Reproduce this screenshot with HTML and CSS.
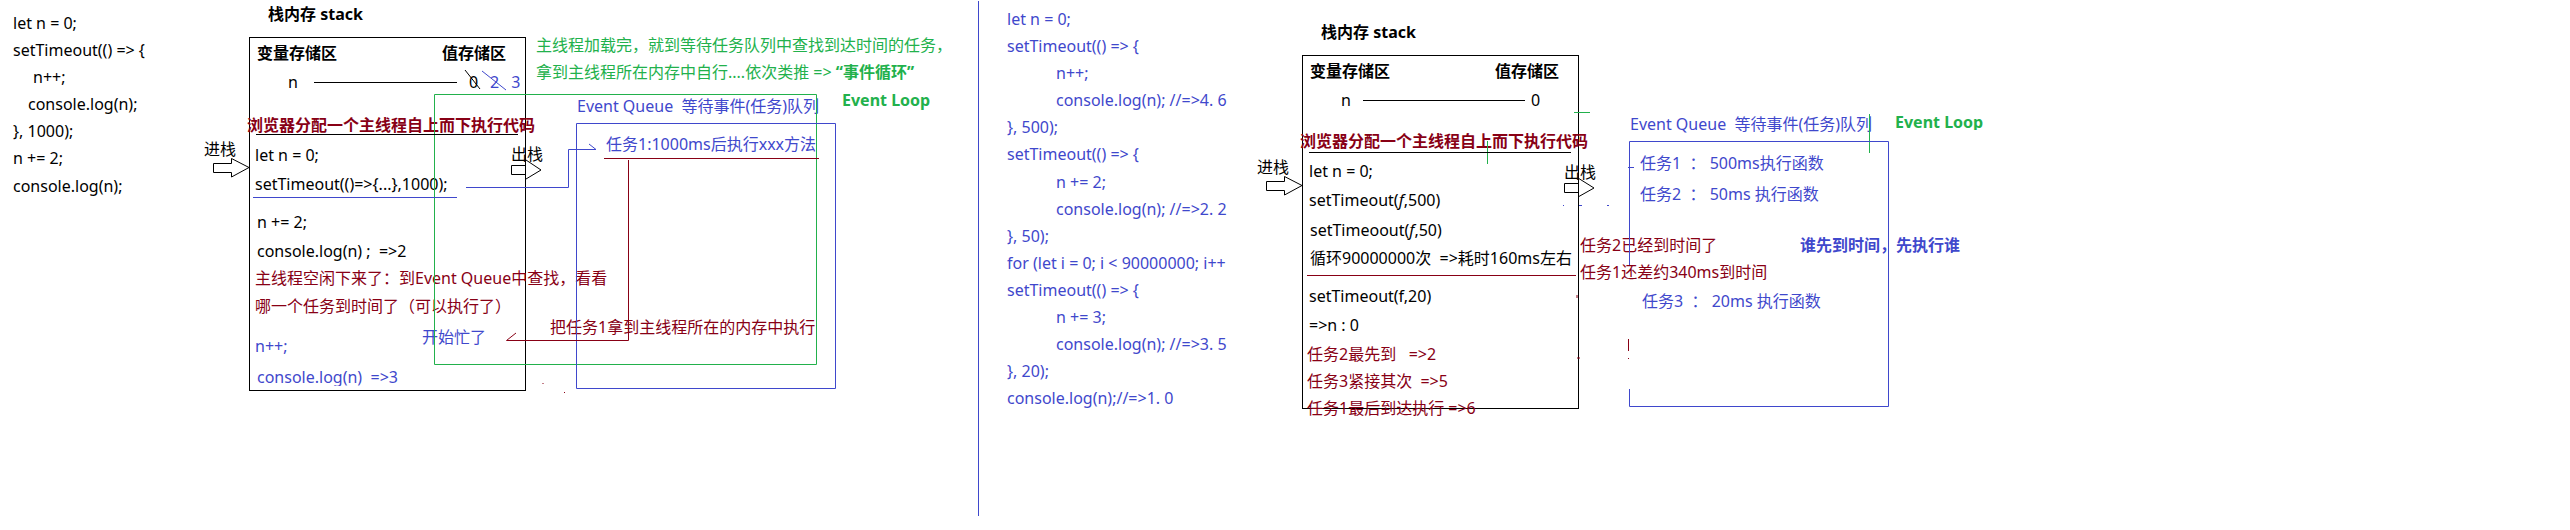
FILE: index.html
```html
<!DOCTYPE html>
<html lang="zh">
<head>
<meta charset="utf-8">
<title>Event Loop</title>
<link rel="stylesheet" href="styles.css">
</head>
<body>
<main class="canvas">
  <svg class="wires" width="2570" height="530" viewBox="0 0 2570 530" fill="none" aria-hidden="true">
    <g class="w-green">
      <path d="M434.5 94.5H816.5V364.5H434.5Z"/>
      <path d="M1574 112.5H1590M1487.5 141V164M1869.5 114V153"/>
    </g>
    <g class="w-blue">
      <path d="M576.5 123.5H835.5V388.5H576.5Z"/>
      <path d="M978.5 1V516"/>
      <path d="M253 197.5H457M466 187.5H568.5V149.5H596L589 144"/>
      <path d="M482 71L506 90"/>
      <path d="M1629.5 265V141.5H1888.5V406.5H1629.5V389"/>
      <path d="M1628 167.5H1634M1563 205.5H1564M1579 205.5H1582M1607 205.5H1609"/>
    </g>
    <g class="w-red">
      <path d="M604 158.5H819M628.5 160V340.5H506.5L516 333"/>
      <path d="M1307 275.5H1576"/>
      <path d="M543 383V384M564 392L565 393M1577 295V298M1577 358H1580M1628.5 339V351M1628.5 358V359"/>
    </g>
    <g class="w-black">
      <path d="M256 134.5H518M1309 152.5H1571"/>
      <path d="M465 70L480 89"/>
      <path d="M213.5 163.5H231.5V158.5L249 167.5L231.5 177V172.5H213.5Z"/>
      <path d="M1266.5 181.5H1284.5V176.5L1302 185.5L1284.5 195V190.5H1266.5Z"/>
      <path d="M526 165.5H511.5V174.5H526M526 160L541 170L526 179"/>
      <path d="M1578 183.5H1564.5V192.5H1578M1578 178L1594 188L1578 197"/>
    </g>
  </svg>

  <div class="code code-a">
    <div class="ln">let n = 0;</div>
    <div class="ln">setTimeout(() =&gt; {</div>
    <div class="ln in-a">n++;</div>
    <div class="ln in-b">console.log(n);</div>
    <div class="ln">}, 1000);</div>
    <div class="ln">n += 2;</div>
    <div class="ln">console.log(n);</div>
  </div>

  <h2 class="title title-a">栈内存 stack</h2>
  <section class="stack stack-a">
    <div class="heads"><b>变量存储区</b><b>值存储区</b></div>
    <div class="slot"><span>n</span><i class="rule rule-a"></i><span class="val">0</span><span class="val-b blue">2</span><span class="val-b blue">3</span></div>
    <div class="row red bold gap-21 out">浏览器分配一个主线程自上而下执行代码</div>
    <div class="row gap-8 mono-l">let n = 0;</div>
    <div class="row gap-7 mono-l">setTimeout(()=&gt;{...},1000);</div>
    <div class="row gap-16 in-3">n += 2;</div>
    <div class="row gap-7 in-3">console.log(n) ; &nbsp;=&gt;2</div>
    <div class="row gap-5 red mono-l">主线程空闲下来了：到Event Queue中查找，看看</div>
    <div class="row gap-6 red mono-l">哪一个任务到时间了（可以执行了）</div>
    <div class="row gap-18 blue mono-l">n++;</div>
    <div class="row gap-9 blue in-3 clip">console.log(n) &nbsp;=&gt;3</div>
  </section>

  <div class="lbl l-in-a">进栈</div>
  <div class="lbl l-out-a">出栈</div>
  <div class="lbl blue l-busy">开始忙了</div>
  <div class="lbl red l-take">把任务1拿到主线程所在的内存中执行</div>

  <div class="note green">
    <div>主线程加载完，就到等待任务队列中查找到达时间的任务，</div>
    <div>拿到主线程所在内存中自行....依次类推 =&gt; <b>“事件循环”</b></div>
  </div>
  <div class="lbl green bold l-loop-a">Event Loop</div>
  <div class="lbl blue l-q-a">Event Queue &nbsp;等待事件(任务)队列</div>
  <div class="lbl blue l-task-a">任务1:1000ms后执行xxx方法</div>

  <div class="code code-b blue">
    <div class="ln">let n = 0;</div>
    <div class="ln">setTimeout(() =&gt; {</div>
    <div class="ln in-c">n++;</div>
    <div class="ln in-c">console.log(n); //=&gt;4. 6</div>
    <div class="ln">}, 500);</div>
    <div class="ln">setTimeout(() =&gt; {</div>
    <div class="ln in-c">n += 2;</div>
    <div class="ln in-c">console.log(n); //=&gt;2. 2</div>
    <div class="ln">}, 50);</div>
    <div class="ln">for (let i = 0; i &lt; 90000000; i++</div>
    <div class="ln">setTimeout(() =&gt; {</div>
    <div class="ln in-c">n += 3;</div>
    <div class="ln in-c">console.log(n); //=&gt;3. 5</div>
    <div class="ln">}, 20);</div>
    <div class="ln">console.log(n);//=&gt;1. 0</div>
  </div>

  <h2 class="title title-b">栈内存 stack</h2>
  <section class="stack stack-b">
    <div class="heads"><b>变量存储区</b><b>值存储区</b></div>
    <div class="slot"><span>n</span><i class="rule rule-b"></i><span class="val-c">0</span></div>
    <div class="row red bold gap-19 out">浏览器分配一个主线程自上而下执行代码</div>
    <div class="row gap-8 in-6">let n = 0;</div>
    <div class="row gap-7 in-6">setTimeout(<em>f</em>,500)</div>
    <div class="row gap-8 in-7">setTimeoout(<em>f</em>,50)</div>
    <div class="row gap-6 in-7 wide">循环90000000次 &nbsp;=&gt;耗时160ms左右</div>
    <div class="row gap-16 in-6">setTimeout(f,20)</div>
    <div class="row gap-7 in-6">=&gt;n : 0</div>
    <div class="row gap-7 red in-4">任务2最先到 &nbsp; =&gt;2</div>
    <div class="row gap-5 red in-4">任务3紧接其次 &nbsp;=&gt;5</div>
    <div class="row gap-5 red in-4">任务1最后到达执行 =&gt;6</div>
  </section>

  <div class="lbl l-in-b">进栈</div>
  <div class="lbl l-out-b">出栈</div>
  <div class="lbl red l-t2">任务2已经到时间了</div>
  <div class="lbl red l-t1">任务1还差约340ms到时间</div>

  <div class="lbl blue l-q-b">Event Queue &nbsp;等待事件(任务)队列</div>
  <div class="lbl green bold l-loop-b"><span>Event Loop</span></div>
  <div class="lbl blue l-task-1">任务1 &nbsp;： 500ms执行函数</div>
  <div class="lbl blue l-task-2">任务2 &nbsp;： 50ms 执行函数</div>
  <div class="lbl blue l-task-3">任务3 &nbsp;： 20ms 执行函数</div>
  <div class="lbl blue bold l-who">谁先到时间，先执行谁</div>
</main>
</body>
</html>
```
FILE: styles.css
```css
* { box-sizing: border-box; }
html, body { margin: 0; padding: 0; background: #fff; }
body {
  width: 2570px;
  height: 530px;
  overflow: hidden;
  color: #000;
  font-family: "Noto Sans", "Noto Sans CJK SC", sans-serif;
  font-size: 16px;
  line-height: 22px;
}
.canvas { position: relative; width: 2570px; height: 530px; overflow: hidden; }
.wires { position: absolute; left: 0; top: 0; z-index: 2; pointer-events: none; }
.w-green { stroke: #22b14c; }
.w-blue { stroke: #3f48cc; }
.w-red { stroke: #880015; }
.w-black { stroke: #000; }

.blue { color: #3f48cc; }
.red { color: #880015; }
.green { color: #22b14c; }
.bold { font-weight: 700; }

.code { position: absolute; white-space: nowrap; }
.code-a { left: 13px; top: 10px; }
.code-b { left: 1007px; top: 6px; }
.ln { height: 27.1px; line-height: 27px; }
.in-a { padding-left: 20px; }
.in-b { padding-left: 15px; }
.in-c { padding-left: 49px; }

.title { position: absolute; margin: 0; font-size: 16px; font-weight: 700; line-height: 22px; white-space: nowrap; }
.title-a { left: 268px; top: 3px; }
.title-b { left: 1321px; top: 21px; }

.stack {
  position: absolute;
  width: 277px;
  border: 1px solid #000;
  white-space: nowrap;
}
.stack-a { left: 249px; top: 37px; height: 354px; }
.stack-b { left: 1302px; top: 55px; height: 354px; }

.heads { display: flex; gap: 105px; padding: 4px 0 0 7px; }
.slot { display: flex; align-items: center; margin-top: 7px; padding-left: 38px; height: 22px; }
.rule { display: block; height: 1px; background: #000; font-style: normal; }
.rule-a { width: 143px; margin-left: 16px; }
.rule-b { width: 162px; margin-left: 12px; }
.val { margin-left: 12px; }
.val-b { margin-left: 12px; }
.val-c { margin-left: 6px; }

.row { height: 22px; }
.out { margin-left: -3px; }
.mono-l { margin-left: 5px; }
.in-3 { margin-left: 7px; }
.in-4 { margin-left: 4px; }
.in-6 { margin-left: 6px; }
.in-7 { margin-left: 7px; }
.clip { height: 20px; overflow: hidden; }
.wide { letter-spacing: 0; }
em { font-style: italic; }
.gap-5 { margin-top: 5px; }
.gap-6 { margin-top: 6px; }
.gap-7 { margin-top: 7px; }
.gap-8 { margin-top: 8px; }
.gap-9 { margin-top: 9px; }
.gap-16 { margin-top: 16px; }
.gap-18 { margin-top: 18px; }
.gap-19 { margin-top: 19px; }
.gap-21 { margin-top: 21px; }

.lbl { position: absolute; white-space: nowrap; }
.l-in-a { left: 204px; top: 138px; }
.l-out-a { left: 511px; top: 143px; }
.l-busy { left: 422px; top: 326px; }
.l-take { left: 550px; top: 316px; }
.note { position: absolute; left: 536px; top: 32px; white-space: nowrap; }
.note div { height: 27px; line-height: 27px; }
.l-loop-a { left: 842px; top: 89px; }
.l-q-a { left: 577px; top: 95px; }
.l-task-a { left: 606px; top: 133px; }
.l-in-b { left: 1257px; top: 156px; }
.l-out-b { left: 1564px; top: 161px; }
.l-t2 { left: 1580px; top: 234px; }
.l-t1 { left: 1580px; top: 261px; }
.l-q-b { left: 1630px; top: 113px; }
.l-loop-b { left: 1895px; top: 114px; height: 16px; line-height: 16px; overflow: hidden; }
.l-task-1 { left: 1640px; top: 152px; }
.l-task-2 { left: 1640px; top: 183px; }
.l-task-3 { left: 1642px; top: 290px; }
.l-who { left: 1800px; top: 234px; }
```
